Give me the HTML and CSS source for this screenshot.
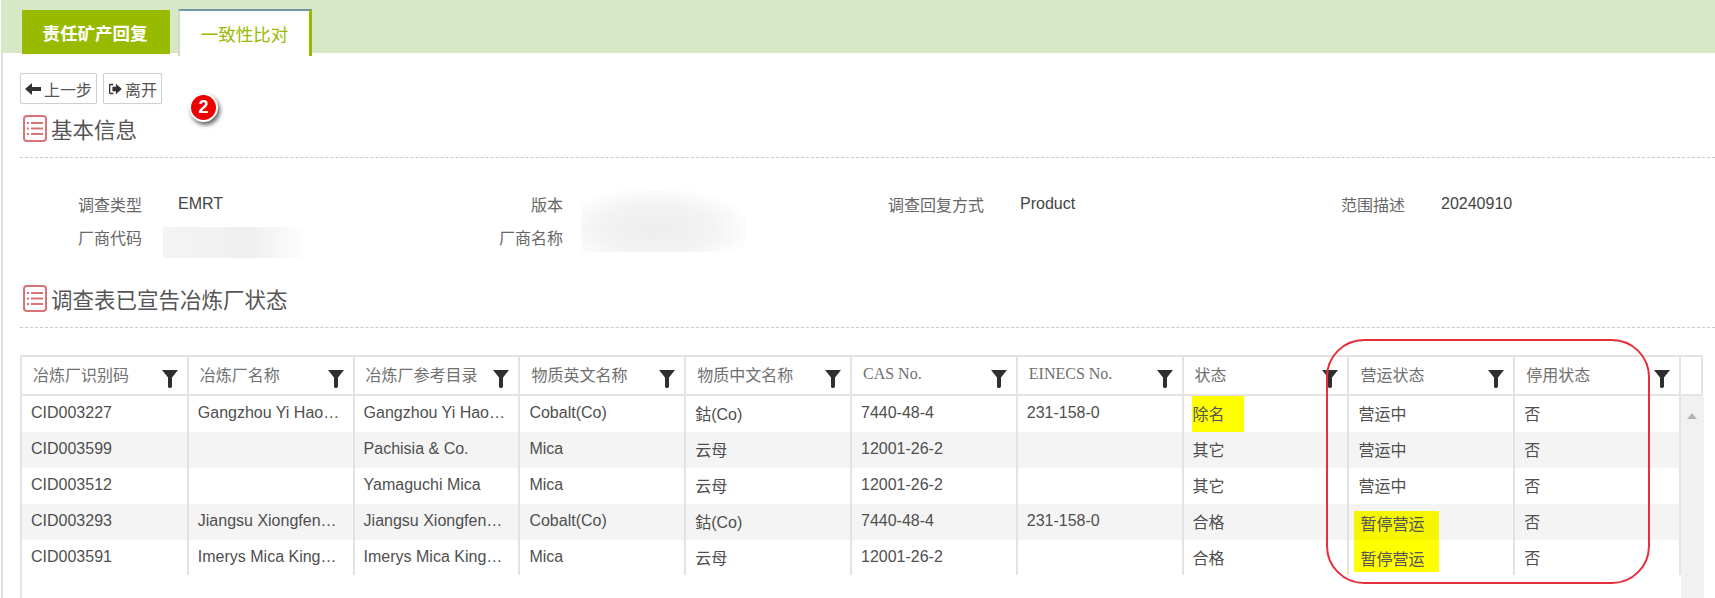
FILE: index.html
```html
<!DOCTYPE html>
<html lang="zh">
<head>
<meta charset="utf-8">
<title>一致性比对</title>
<link rel="stylesheet" href="styles.css">
</head>
<body>
<div class="page">
  <nav class="tabs">
    <a class="tab tab-done">责任矿产回复</a>
    <a class="tab tab-active">一致性比对</a>
  </nav>
  <main class="content">
    <div class="toolbar">
      <button class="btn btn-back"><svg class="btn-ico" viewBox="0 0 16 14"><path d="M0 7 7 1v4h9v4H7v4z"/></svg>上一步</button>
      <button class="btn btn-exit"><svg class="btn-ico" viewBox="0 0 16 14"><path d="M6 1H2.500A1.500 1.500 0 0 0 1 2.500v9A1.500 1.500 0 0 0 2.500 13H6v-1.500H3q-.5 0-.5-.5V3q0-.5.5-.5h3zM9 1l7 6-7 6V9.500H5v-5h4z"/></svg>离开</button>
    </div>
    <span class="badge">2</span>

    <h2 class="section-title section-first">
      <svg class="list-ico" viewBox="0 0 24 27"><rect x="1" y="1" width="22" height="25" rx="3"/><path d="M8 8h12M8 13.500h12M8 19h12M4 8h2M4 13.500h2M4 19h2"/></svg>基本信息
    </h2>

    <section class="info">
      <div class="info-item"><span class="info-label">调查类型</span><span class="info-value">EMRT</span></div>
      <div class="info-item"><span class="info-label">版本</span><span class="info-value"></span></div>
      <div class="info-item"><span class="info-label">调查回复方式</span><span class="info-value">Product</span></div>
      <div class="info-item"><span class="info-label">范围描述</span><span class="info-value">20240910</span></div>
      <div class="info-item"><span class="info-label">厂商代码</span><span class="info-value"></span></div>
      <div class="info-item"><span class="info-label">厂商名称</span><span class="info-value"></span></div>
      <i class="redact redact-code"></i>
      <i class="redact redact-name"></i>
    </section>

    <h2 class="section-title section-second">
      <svg class="list-ico" viewBox="0 0 24 27"><rect x="1" y="1" width="22" height="25" rx="3"/><path d="M8 8h12M8 13.500h12M8 19h12M4 8h2M4 13.500h2M4 19h2"/></svg>调查表已宣告冶炼厂状态
    </h2>

    <section class="grid">
      <table class="grid-head">
        <tr>
          <th>冶炼厂识别码<svg class="funnel" viewBox="0 0 16 18"><path d="M0 0h16l-6 7.500V17l-1.500 1H7l-1-1V7.500z"/></svg></th>
          <th>冶炼厂名称<svg class="funnel" viewBox="0 0 16 18"><path d="M0 0h16l-6 7.500V17l-1.500 1H7l-1-1V7.500z"/></svg></th>
          <th>冶炼厂参考目录<svg class="funnel" viewBox="0 0 16 18"><path d="M0 0h16l-6 7.500V17l-1.500 1H7l-1-1V7.500z"/></svg></th>
          <th>物质英文名称<svg class="funnel" viewBox="0 0 16 18"><path d="M0 0h16l-6 7.500V17l-1.500 1H7l-1-1V7.500z"/></svg></th>
          <th>物质中文名称<svg class="funnel" viewBox="0 0 16 18"><path d="M0 0h16l-6 7.500V17l-1.500 1H7l-1-1V7.500z"/></svg></th>
          <th>CAS No.<svg class="funnel" viewBox="0 0 16 18"><path d="M0 0h16l-6 7.500V17l-1.500 1H7l-1-1V7.500z"/></svg></th>
          <th>EINECS No.<svg class="funnel" viewBox="0 0 16 18"><path d="M0 0h16l-6 7.500V17l-1.500 1H7l-1-1V7.500z"/></svg></th>
          <th>状态<svg class="funnel" viewBox="0 0 16 18"><path d="M0 0h16l-6 7.500V17l-1.500 1H7l-1-1V7.500z"/></svg></th>
          <th>营运状态<svg class="funnel" viewBox="0 0 16 18"><path d="M0 0h16l-6 7.500V17l-1.500 1H7l-1-1V7.500z"/></svg></th>
          <th>停用状态<svg class="funnel" viewBox="0 0 16 18"><path d="M0 0h16l-6 7.500V17l-1.500 1H7l-1-1V7.500z"/></svg></th>
          <th class="head-spacer"></th>
        </tr>
      </table>
      <div class="grid-main">
        <table class="grid-body">
          <tr>
            <td>CID003227</td><td>Gangzhou Yi Hao…</td><td>Gangzhou Yi Hao…</td><td>Cobalt(Co)</td><td>鈷(Co)</td><td>7440-48-4</td><td>231-158-0</td><td class="has-mark"><span class="mark mark-full">除名</span></td><td>营运中</td><td>否</td>
          </tr>
          <tr class="alt">
            <td>CID003599</td><td></td><td>Pachisia &amp; Co.</td><td>Mica</td><td>云母</td><td>12001-26-2</td><td></td><td>其它</td><td>营运中</td><td>否</td>
          </tr>
          <tr>
            <td>CID003512</td><td></td><td>Yamaguchi Mica</td><td>Mica</td><td>云母</td><td>12001-26-2</td><td></td><td>其它</td><td>营运中</td><td>否</td>
          </tr>
          <tr class="alt">
            <td>CID003293</td><td>Jiangsu Xiongfen…</td><td>Jiangsu Xiongfen…</td><td>Cobalt(Co)</td><td>鈷(Co)</td><td>7440-48-4</td><td>231-158-0</td><td>合格</td><td class="has-mark"><span class="mark mark-top">暂停营运</span></td><td>否</td>
          </tr>
          <tr>
            <td>CID003591</td><td>Imerys Mica King…</td><td>Imerys Mica King…</td><td>Mica</td><td>云母</td><td>12001-26-2</td><td></td><td>合格</td><td class="has-mark"><span class="mark mark-bottom">暂停营运</span></td><td>否</td>
          </tr>
        </table>
        <div class="scrollbar"><i class="scroll-up"></i></div>
      </div>
    </section>
  </main>
  <div class="callout"></div>
</div>
</body>
</html>
```

FILE: styles.css
```css
* { box-sizing: border-box; }
html, body { margin: 0; height: 100%; }
body {
  background: #fff;
  overflow: hidden;
  font-family: "Liberation Sans", "Noto Sans CJK SC", sans-serif;
  color: #555;
}
.page {
  position: relative;
  height: 598px;
  display: flex;
  flex-direction: column;
}

/* tabs */
.tabs {
  height: 53px;
  flex: none;
  margin-left: 1px;
  background: #d6e8c5;
  display: flex;
  align-items: flex-start;
  padding: 9px 0 0 21px;
  gap: 8px;
}
.tab {
  display: flex;
  align-items: center;
  justify-content: center;
  font-size: 17.500px;
}
.tab-done {
  width: 148px;
  height: 44px;
  margin-top: 1px;
  padding-right: 2px;
  background: #98bb00;
  color: #fff;
  font-weight: 700;
}
.tab-active {
  width: 134px;
  height: 47px;
  background: #fff;
  color: #98bb00;
  border-top: 2px solid #6f97a8;
  border-left: 2px solid #d3d8cc;
  border-right: 3px solid #98bb00;
  position: relative;
  z-index: 1;
}

/* content */
.content {
  position: relative;
  flex: 1;
  min-height: 0;
  border-left: 2px solid #dedede;
  margin-left: 1px;
  padding: 20px 0 0 17px;
  display: flex;
  flex-direction: column;
}
.toolbar { display: flex; gap: 6px; height: 30px; flex: none; }
.btn {
  display: flex;
  align-items: center;
  justify-content: center;
  gap: 3px;
  height: 31px;
  padding: 0;
  background: #fff;
  border: 1px solid #cfcfcf;
  border-radius: 2px;
  box-shadow: 0 0 1px #ddd;
  font: 16px "Liberation Sans", "Noto Sans CJK SC", sans-serif;
  color: #555;
}
.btn-back { width: 77px; }
.btn-exit { width: 59px; }
.btn-ico { width: 16px; height: 14px; fill: #333; flex: none; }
.btn-exit .btn-ico { width: 14px; height: 12px; }

.badge {
  position: absolute;
  left: 186px;
  top: 40px;
  width: 29px;
  height: 29px;
  border-radius: 50%;
  background: #ee0000;
  border: 2px solid #fff;
  box-shadow: 2px 3px 4px rgba(0, 0, 0, .6);
  color: #fff;
  font: 700 18px/25px "Liberation Sans", sans-serif;
  text-align: center;
}

.section-title {
  display: flex;
  align-items: center;
  gap: 4px;
  margin: 0;
  padding-left: 3px;
  font-weight: 400;
  font-size: 21.500px;
  color: #555;
  border-bottom: 1px dashed #c9c9c9;
  flex: none;
}
.section-first { height: 55px; padding-top: 9px; padding-bottom: 13px; }
.section-second { height: 46px; padding-bottom: 13px; margin-top: 29px; }
.list-ico { width: 24px; height: 27px; fill: none; stroke: #d9737a; stroke-width: 2; flex: none; }

/* info */
.info {
  position: relative;
  flex: none;
  display: grid;
  grid-template-columns: repeat(4, 421px);
  grid-auto-rows: 33px;
  margin-top: 29px;
  font-size: 16px;
}
.info-item { display: flex; align-items: center; gap: 36px; }
.info-label { width: 122px; text-align: right; color: #666; flex: none; }
.info-value { color: #444; padding-top: 1px; }
.redact { position: absolute; display: block; }
.redact-code {
  left: 143px; top: 40px; width: 145px; height: 31px;
  background: linear-gradient(90deg, #f4f4f4 0, #efefef 60%, #fff 100%);
}
.redact-name {
  left: 561px; top: 3px; width: 165px; height: 62px;
  background: radial-gradient(ellipse at 45% 62%, #ededed 0, #f3f3f3 45%, #fff 78%);
}

/* grid */
.grid {
  flex: 1;
  min-height: 0;
  margin-top: 27px;
  width: 1684px;
  border-left: 2px solid #e3e3e3;
  display: flex;
  flex-direction: column;
}
table { border-collapse: collapse; table-layout: fixed; }
.grid-head { width: 1680px; height: 41px; flex: none; border-top: 2px solid #e3e3e3; border-bottom: 2px solid #e3e3e3; }
.grid-head th {
  position: relative;
  width: 165.800px;
  padding: 0 10px 3px 11px;
  text-align: left;
  font: 400 16px "Liberation Serif", "Noto Sans CJK SC", serif;
  color: #707070;
  border-right: 2px solid #e3e3e3;
  white-space: nowrap;
}
.grid-head .head-spacer { width: 22px; padding: 0; }
.funnel {
  position: absolute;
  right: 9px;
  top: 13px;
  width: 16px;
  height: 18px;
  fill: #2f2f2f;
}
.grid-main { flex: 1; min-height: 0; display: flex; align-items: stretch; }
.grid-body { width: 1658px; height: 179px; flex: none; align-self: flex-start; }
.grid-body td {
  width: 165.800px;
  height: 36px;
  padding: 0 10px 2px 9px;
  font-size: 16px;
  color: #4f4f4f;
  border-right: 2px solid #e3e3e3;
  white-space: nowrap;
}
.grid-body tr:last-child td { height: 35px; }
.grid-body .alt td { background: #f4f4f4; }
.grid-body td.has-mark { padding: 0; position: relative; }
.mark {
  position: absolute;
  display: flex;
  align-items: center;
  color: #555;
}
.mark-full { top: 0; left: 8px; height: 36px; width: 52px; background: #ffff00; padding: 0 2px 2px 1px; }
.mark-top { bottom: 0; left: 5px; height: 29px; width: 85px; background: #f6f600; padding: 0 0 0 6px; align-items: flex-start; }
.mark-bottom { top: 0; left: 5px; height: 32px; width: 85px; background: #ffff00; padding: 6px 0 0 6px; align-items: flex-start; }
.scrollbar { flex: 1; background: #f1f1f1; position: relative; }
.scroll-up {
  position: absolute;
  left: 6px;
  top: 17px;
  width: 0;
  height: 0;
  border-left: 5px solid transparent;
  border-right: 5px solid transparent;
  border-bottom: 6px solid #b5b5b5;
}

/* red annotation */
.callout {
  position: absolute;
  left: 1326px;
  top: 339px;
  width: 324px;
  height: 245px;
  border: 2px solid #e4303c;
  border-radius: 38px;
  pointer-events: none;
}
```
